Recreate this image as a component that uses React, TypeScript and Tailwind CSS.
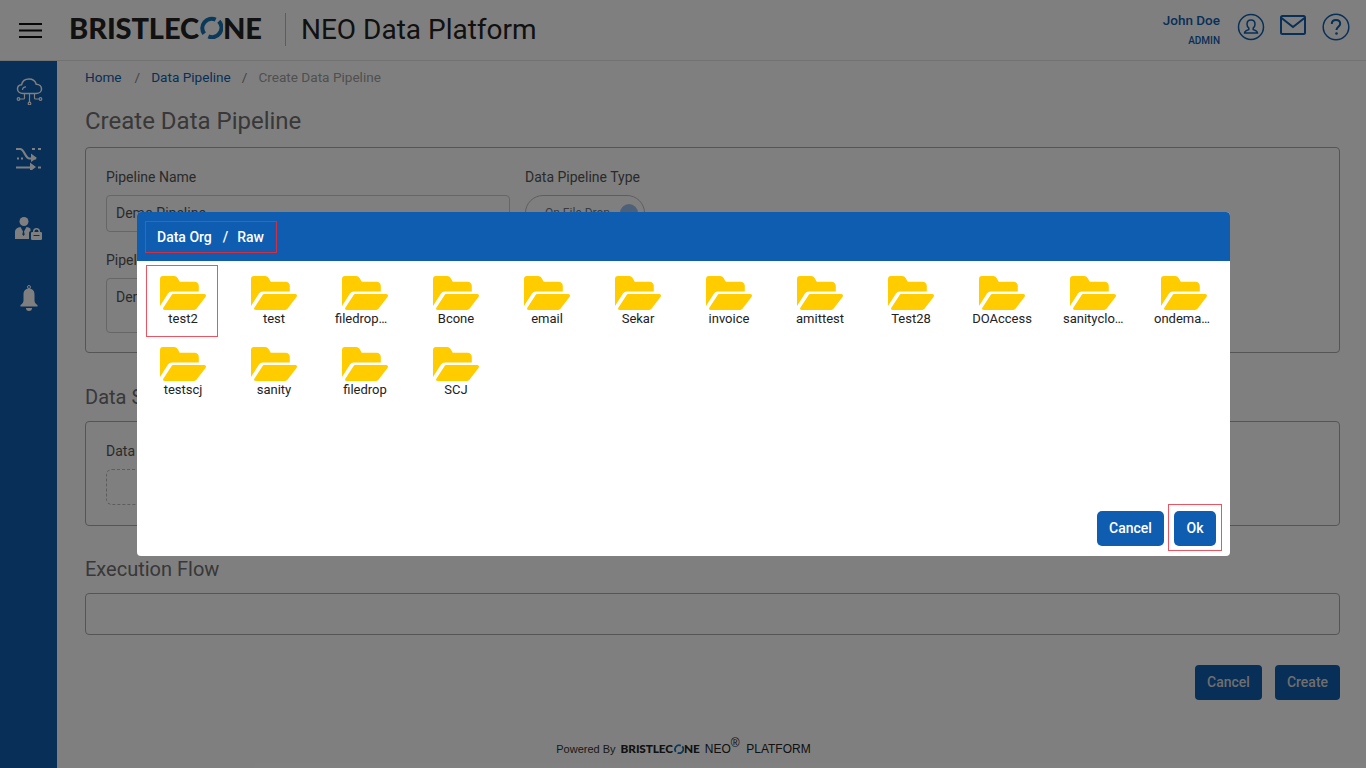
import React from "react";

const folders = ["test2","test","filedrop…","Bcone","email","Sekar","invoice","amittest","Test28","DOAccess","sanityclo…","ondema…","testscj","sanity","filedrop","SCJ"];

function Folder() {
  return (
    <svg width="47" height="36" viewBox="0 0 47 36" fill="#ffcc00">
      <path d="M0 3a3 3 0 0 1 3-3h11c2 0 3.200 1 4.200 3l1.500 2.800h14.800c2.500 0 4.300 1.800 4.300 4.300v5.400H12c-2 0-3 .7-4 2L0 30z" />
      <path d="M13 18h31c2 0 2.500 1.500 1.500 3L37 32c-1 1.500-2 2-4 2H5c-2 0-2.500-1-1.500-2.500L11 20c.7-1.200 1-2 2-2z" />
    </svg>
  );
}

function Logo({ small }: { small?: boolean }) {
  if (small) {
    return (
      <span className="inline-flex items-center font-['Lato',sans-serif] font-black text-[11.800px] leading-none text-[#222] tracking-[-0.1px]">
        BRISTLEC
        <svg width="10" height="10" viewBox="0 0 22 22" className="mx-[0.5px]" fill="none">
          <path d="M15 3.500A9 9 0 0 0 4 17" stroke="#1473b5" strokeWidth="4" />
          <path d="M8 19.500A9 9 0 0 0 18 5" stroke="#1473b5" strokeWidth="4" />
        </svg>
        NE
      </span>
    );
  }
  return (
    <span className="inline-flex items-center font-['Lato',sans-serif] font-black text-[29px] leading-none text-[#222] tracking-[-0.1px]">
      BRISTLEC
      <svg width="23" height="23" viewBox="0 0 22 22" className="mx-[0.5px]" fill="none">
        <path d="M15 3.500A9 9 0 0 0 4 17" stroke="#1473b5" strokeWidth="4" />
        <path d="M8 19.500A9 9 0 0 0 18 5" stroke="#1473b5" strokeWidth="4" />
      </svg>
      NE
    </span>
  );
}

export default function App() {
  return (
    <div className="relative h-screen w-full overflow-hidden bg-white font-['Roboto',sans-serif] text-[14px] text-[#555]">
      <header className="flex h-[61px] items-center border-b border-[#e4e4e4] bg-white pl-[19px] pr-[16px]">
        <svg width="23" height="16" viewBox="0 0 23 16" stroke="#111" strokeWidth="2">
          <path d="M0 2h23M0 8.500h23M0 15h23" />
        </svg>
        <div className="ml-[28px] mt-[-2px] -translate-x-px"><Logo /></div>
        <div className="ml-[22px] mt-[-2px] h-[33px] w-px bg-[#bbb]" />
        <div className="ml-[15px] text-[28px] leading-none text-[#222]">NEO Data Platform</div>
        <div className="ml-auto mr-[17px] mt-[-1px] text-right text-[#0f5eb0]">
          <div className="text-[13.500px] font-medium leading-[16px]">John Doe</div>
          <div className="mt-[7px] text-[10px] font-medium leading-[12px]">ADMIN</div>
        </div>
        <svg width="28" height="28" viewBox="0 0 28 28" fill="none" stroke="#0f5eb0" strokeWidth="1.500" className="mb-[6px] mr-[15px]">
          <circle cx="14" cy="14" r="12.500" />
          <path d="M14 7c-2.600 0-4 2-4 4.200 0 1.600.7 3 1.800 3.800v1.500c-1.500.7-4.300 1.400-4.300 3.500h13c0-2.100-2.800-2.800-4.300-3.500V15c1.100-.8 1.800-2.200 1.800-3.800C18 9 16.600 7 14 7z" />
        </svg>
        <svg width="26" height="20" viewBox="0 0 26 20" fill="none" stroke="#0f5eb0" strokeWidth="2" className="mb-[11px] mr-[16px]">
          <rect x="1" y="1" width="24" height="18" rx="1.500" />
          <path d="M1.500 3L13 12 24.500 3" />
        </svg>
        <svg width="28" height="28" viewBox="0 0 28 28" fill="none" stroke="#0f5eb0" strokeWidth="1.500" className="mb-[6px]">
          <circle cx="14" cy="14" r="12.800" />
          <path d="M9.800 11c0-2.600 1.900-4 4.200-4s4.200 1.400 4.200 3.700c0 3-3.700 3.100-3.700 6.300" strokeWidth="2" />
          <circle cx="14.500" cy="20.500" r="1.300" fill="#0f5eb0" stroke="none" />
        </svg>
      </header>

      <div className="flex h-[707px]">
        <aside className="flex w-[57px] shrink-0 flex-col items-center bg-[#0f5eb0] pt-[17px]">
          <svg width="27" height="27" viewBox="0 0 27 27" fill="none" stroke="#fff" strokeWidth="1.200" className="ml-[2px]">
            <path d="M7 15.500c-3 0-5.500-1.800-5.500-4.500 0-2.300 1.800-4 4-4.200C6.300 3.300 9.300 1 13 1c3.700 0 6.400 2.300 7.200 5.200 3 .1 5.300 2 5.300 4.700 0 2.700-2.400 4.600-5.500 4.600z" strokeWidth="1.500" />
            <path d="M6.500 12c0-2 1.800-3.200 3.500-3.200M13.500 15.500V24M8.500 15.500V20a1 1 0 0 1-1 1H4M18.500 15.500V20a1 1 0 0 0 1 1H23" />
            <circle cx="2.500" cy="21" r="1.300" /><circle cx="13.500" cy="25.500" r="1.300" /><circle cx="24.500" cy="21" r="1.300" />
          </svg>
          <svg width="25" height="23" viewBox="0 0 25 23" fill="none" stroke="#fff" strokeWidth="2.200" className="mt-[42px]">
            <path d="M0 2h4c4.500 0 5 9.500 9.500 9.500H20M0 20.500h17" />
            <path d="M15 15.500V7l6 4.500zM14 25V16l6 4.500z" fill="#fff" stroke="none" transform="translate(0 -0.500)" />
            <path d="M16 2h3M22 2h3M1 11.500h2M5 11.500h2M22 20.500h3" />
          </svg>
          <svg width="28" height="23" viewBox="0 0 28 23" fill="#fff" className="mt-[47px]">
            <circle cx="9" cy="4.500" r="4.500" />
            <path d="M0 22v-7c0-3 2.500-4.500 5.500-5L8 14.500l-.7 3 1.200 1.500 1.200-1.500-.7-3 2.500-4.500c1.500.3 3 .8 4 1.700V14a2 2 0 0 0-1.500 2v6z" />
            <path d="M21.500 11a3.500 3.500 0 0 0-3.500 3.500V15h1.500v-.5a2 2 0 0 1 4 0v.5H25v-.5a3.500 3.500 0 0 0-3.500-3.500z" />
            <path d="M17.200 15h8.600a1.200 1.200 0 0 1 1.200 1.200v5.600a1.200 1.200 0 0 1-1.200 1.200h-8.600a1.200 1.200 0 0 1-1.200-1.200v-5.600a1.200 1.200 0 0 1 1.200-1.200zM18.500 18v1h6v-1z" fillRule="evenodd" />
          </svg>
          <svg width="18" height="26" viewBox="0 0 18 26" fill="#fff" className="mt-[45px]">
            <circle cx="9" cy="2" r="1.500" fill="none" stroke="#fff" />
            <path d="M9 3.500c-3.500 0-5.500 2.500-5.500 6v6C3.500 17.500 2 19 .500 20v1.500h17V20c-1.500-1-3-2.500-3-4.500v-6c0-3.500-2-6-5.500-6z" />
            <path d="M6 23h6a3 3 0 0 1-6 0z" />
          </svg>
        </aside>

        <main className="relative min-w-0 flex-1 pl-[28px] pr-[26px]">
          <nav className="flex h-[32px] items-center pt-[1px] text-[13.600px] leading-none">
            <span className="text-[#0f5eb0]">Home</span>
            <span className="ml-[13px] mr-[11px] text-[#888]">/</span>
            <span className="text-[#0f5eb0]">Data Pipeline</span>
            <span className="mx-[11px] text-[#888]">/</span>
            <span className="text-[#a0a0a0]">Create Data Pipeline</span>
          </nav>
          <h1 className="mt-[13px] text-[24px] leading-[30px] text-[#707070]">Create Data Pipeline</h1>

          <section className="mt-[11px] h-[206px] rounded-[4px] border border-[#aaa] px-[20px] pt-[20px]">
            <div className="flex gap-[15px]">
              <div className="w-[404px]">
                <div className="leading-[18px]">Pipeline Name</div>
                <div className="mt-[9px] flex h-[37px] items-center rounded-[4px] border border-[#ccc] px-[9px] text-[#555]">Demo Pipeline</div>
              </div>
              <div>
                <div className="leading-[18px]">Data Pipeline Type</div>
                <div className="mt-[9px] flex h-[36px] w-[120px] items-center justify-between rounded-full border border-[#bbb] pl-[19px] pr-[6px] text-[12px] text-[#777]">
                  On File Drop
                  <span className="size-[18px] rounded-full bg-[#9cc0f0]" />
                </div>
              </div>
            </div>
            <div className="mt-[19px] leading-[18px]">Pipeline Description</div>
            <div className="mt-[9px] h-[55px] w-[404px] rounded-[4px] border border-[#ccc] px-[9px] pt-[8px] text-[#555]">Demo Pipeline</div>
          </section>

          <h2 className="mt-[29px] text-[20px] leading-[30px] text-[#707070]">Data Source</h2>
          <section className="mt-[9px] h-[105px] rounded-[4px] border border-[#aaa] px-[20px] pt-[20px]">
            <div className="leading-[18px]">Data Source</div>
            <div className="mt-[9px] h-[36px] w-[300px] rounded-[6px] border border-dashed border-[#bbb]" />
          </section>

          <h2 className="mt-[28px] text-[20px] leading-[30px] text-[#707070]">Execution Flow</h2>
          <section className="mt-[9px] h-[42px] rounded-[4px] border border-[#aaa]" />

          <div className="mt-[30px] flex justify-end gap-[13px]">
            <button className="h-[35px] w-[67px] rounded-[4px] bg-[#0f5eb0] text-[14px] font-medium text-[#ddd]">Cancel</button>
            <button className="h-[35px] w-[65px] rounded-[4px] bg-[#0f5eb0] text-[14px] font-medium text-[#ddd]">Create</button>
          </div>

          <footer className="mt-[41px] flex items-center justify-center gap-[5px] pr-[58px] font-['Liberation_Sans',sans-serif] text-[11px] leading-[16px] text-[#333]">
            <span>Powered By</span>
            <Logo small />
            <span className="text-[12px] text-[#222]">NEO<sup className="text-[12px]">®</sup>&nbsp;&nbsp;PLATFORM</span>
          </footer>
        </main>
      </div>

      <div className="absolute inset-0 flex bg-black/50 pl-[137px] pt-[212px]">
        <div className="flex h-[344px] w-[1093px] flex-col overflow-hidden rounded-[4px] bg-white">
          <div className="flex h-[49px] shrink-0 items-center bg-[#0f5db0] pl-[8px]">
            <div className="flex h-[32px] w-[132px] items-center border border-[#d0303f] pl-[11px] text-[14px] font-medium leading-none text-white">
              <span>Data Org</span>
              <span className="ml-[11px]">/</span>
              <span className="ml-[9px]">Raw</span>
            </div>
          </div>
          <div className="grid grid-cols-[repeat(12,72px)] auto-rows-[71px] gap-x-[19px] pl-[9px] pt-[4px]">
            {folders.map((f, i) => (
              <div key={f + i} className={`flex h-[71px] w-[72px] flex-col items-center border pl-[2px] pt-[10px] ${i === 0 ? "h-[72px] border-[#f0535f]" : "border-transparent"}`}>
                <Folder />
                <div className={`mt-[-1px] whitespace-nowrap text-center text-[13px] leading-[16px] text-[#222] ${f.endsWith("…") ? "ml-[4px] self-start" : ""}`}>{f}</div>
              </div>
            ))}
          </div>
          <div className="mt-auto flex items-start justify-end gap-[4px] pb-[5px] pr-[8px]">
            <button className="mt-[7px] h-[35px] w-[67px] rounded-[5px] bg-[#0f5db0] text-[14px] font-medium text-white">Cancel</button>
            <div className="flex h-[47px] w-[54px] justify-center border border-[#f0535f] pt-[6px]">
              <button className="h-[35px] w-[42px] rounded-[5px] bg-[#0f5db0] text-[14px] font-medium text-white">Ok</button>
            </div>
          </div>
        </div>
      </div>
    </div>
  );
}
